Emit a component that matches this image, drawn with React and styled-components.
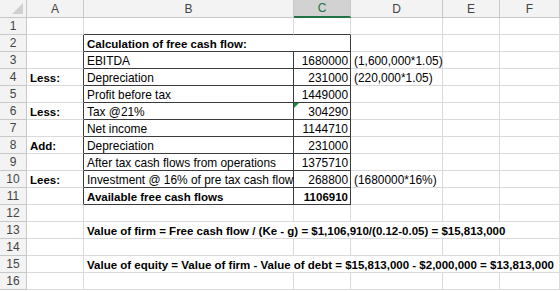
import styled, { createGlobalStyle, css } from 'styled-components';

const gridLine = '#dadada';
const boxLine = '#3c3c3c';
const headerLine = '#c8c8c8';

const GlobalStyle = createGlobalStyle`
    html, body {
        margin: 0;
        padding: 0;
        background: #ffffff;
    }
    body {
        font-family: 'Liberation Sans', Arial, sans-serif;
        font-size: 11.9px;
        color: #000000;
    }
`;

const Sheet = styled.div`
    display: grid;
    grid-template-columns: 27px 57px 210px 57px 92px 57px 60px;
    grid-template-rows: 18px repeat(16, 17px);
    width: 560px;
    height: 291px;
    overflow: hidden;
    background: #ffffff;
`;

const Corner = styled.div`
    position: relative;
    background: #f3f3f3;
    border-right: 1px solid ${headerLine};
    border-bottom: 1px solid ${headerLine};
    box-sizing: border-box;

    &::after {
        content: '';
        position: absolute;
        right: 3px;
        bottom: 3px;
        width: 0;
        height: 0;
        border-left: 11px solid transparent;
        border-bottom: 11px solid #d0d0d0;
    }
`;

const ColHead = styled.div`
    display: flex;
    align-items: center;
    justify-content: center;
    box-sizing: border-box;
    background: ${(p) => (p.$active ? '#d2d2d2' : '#f3f3f3')};
    color: ${(p) => (p.$active ? '#217346' : '#444444')};
    border-right: 1px solid ${headerLine};
    border-bottom: ${(p) => (p.$active ? '2px solid #217346' : `1px solid ${headerLine}`)};
    font-size: 12px;
`;

const RowHead = styled.div`
    display: flex;
    align-items: center;
    justify-content: center;
    box-sizing: border-box;
    background: #f3f3f3;
    color: #444444;
    border-right: 1px solid ${headerLine};
    border-bottom: 1px solid ${headerLine};
    font-size: 12px;
`;

const Cell = styled.div`
    position: relative;
    display: flex;
    align-items: center;
    box-sizing: border-box;
    padding: 2px 3px 0;
    white-space: nowrap;
    overflow: visible;
    border-right: 1px solid ${(p) => p.$right || gridLine};
    border-bottom: 1px solid ${(p) => p.$bottom || gridLine};
    font-weight: ${(p) => (p.$bold ? 700 : 400)};
    font-size: ${(p) => (p.$bold ? '11.5px' : '11.9px')};
    justify-content: ${(p) => (p.$num ? 'flex-end' : 'flex-start')};
    padding-right: ${(p) => (p.$num ? '2px' : '3px')};
    ${(p) => p.$span && css`grid-column: span ${p.$span};`}
    ${(p) =>
        p.$flag &&
        css`
            &::before {
                content: '';
                position: absolute;
                left: 0;
                top: 0;
                width: 0;
                height: 0;
                border-top: 5px solid #1f8a3b;
                border-right: 5px solid transparent;
            }
        `}
`;

const columns = ['A', 'B', 'C', 'D', 'E', 'F'];

const table = {
    2: { b: 'Calculation of free cash flow:', bold: true, title: true },
    3: { b: 'EBITDA', c: '1680000', d: '(1,600,000*1.05)' },
    4: { a: 'Less:', b: 'Depreciation', c: '231000', d: '(220,000*1.05)' },
    5: { b: 'Profit before tax', c: '1449000' },
    6: { a: 'Less:', b: 'Tax @21%', c: '304290', flag: true },
    7: { b: 'Net income', c: '1144710' },
    8: { a: 'Add:', b: 'Depreciation', c: '231000' },
    9: { b: 'After tax cash flows from operations', c: '1375710' },
    10: { a: 'Lees:', b: 'Investment @ 16% of pre tax cash flow', c: '268800', d: '(1680000*16%)' },
    11: { b: 'Available free cash flows', c: '1106910', bold: true },
};

const notes = {
    13: 'Value of firm = Free cash flow / (Ke - g) = $1,106,910/(0.12-0.05) = $15,813,000',
    15: 'Value of equity = Value of firm - Value of debt = $15,813,000 - $2,000,000 = $13,813,000',
};

function renderRow(n) {
    const cells = [<RowHead key="h">{n}</RowHead>];

    if (notes[n]) {
        cells.push(<Cell key="a" />);
        cells.push(
            <Cell key="b" $span={5} $bold>
                {notes[n]}
            </Cell>
        );
        return cells;
    }

    const row = table[n];
    const inBox = Boolean(row);
    const aboveBox = n === 1;

    cells.push(
        <Cell key="a" $bold $right={inBox ? boxLine : undefined}>
            {row?.a}
        </Cell>
    );

    if (row?.title) {
        cells.push(
            <Cell key="b" $span={2} $bold $right={boxLine} $bottom={boxLine}>
                {row.b}
            </Cell>
        );
    } else {
        const edge = inBox || aboveBox ? boxLine : undefined;
        cells.push(
            <Cell key="b" $bold={row?.bold} $right={inBox ? boxLine : undefined} $bottom={edge}>
                {row?.b}
            </Cell>
        );
        cells.push(
            <Cell key="c" $num $bold={row?.bold} $flag={row?.flag} $right={inBox ? boxLine : undefined} $bottom={edge}>
                {row?.c}
            </Cell>
        );
    }

    cells.push(<Cell key="d">{row?.d}</Cell>);
    cells.push(<Cell key="e" />);
    cells.push(<Cell key="f" />);
    return cells;
}

export default function App() {
    const rows = Array.from({ length: 16 }, (_, i) => i + 1);

    return (
        <>
            <GlobalStyle />
            <Sheet>
                <Corner />
                {columns.map((c) => (
                    <ColHead key={c} $active={c === 'C'}>
                        {c}
                    </ColHead>
                ))}
                {rows.map((n) => renderRow(n))}
            </Sheet>
        </>
    );
}
